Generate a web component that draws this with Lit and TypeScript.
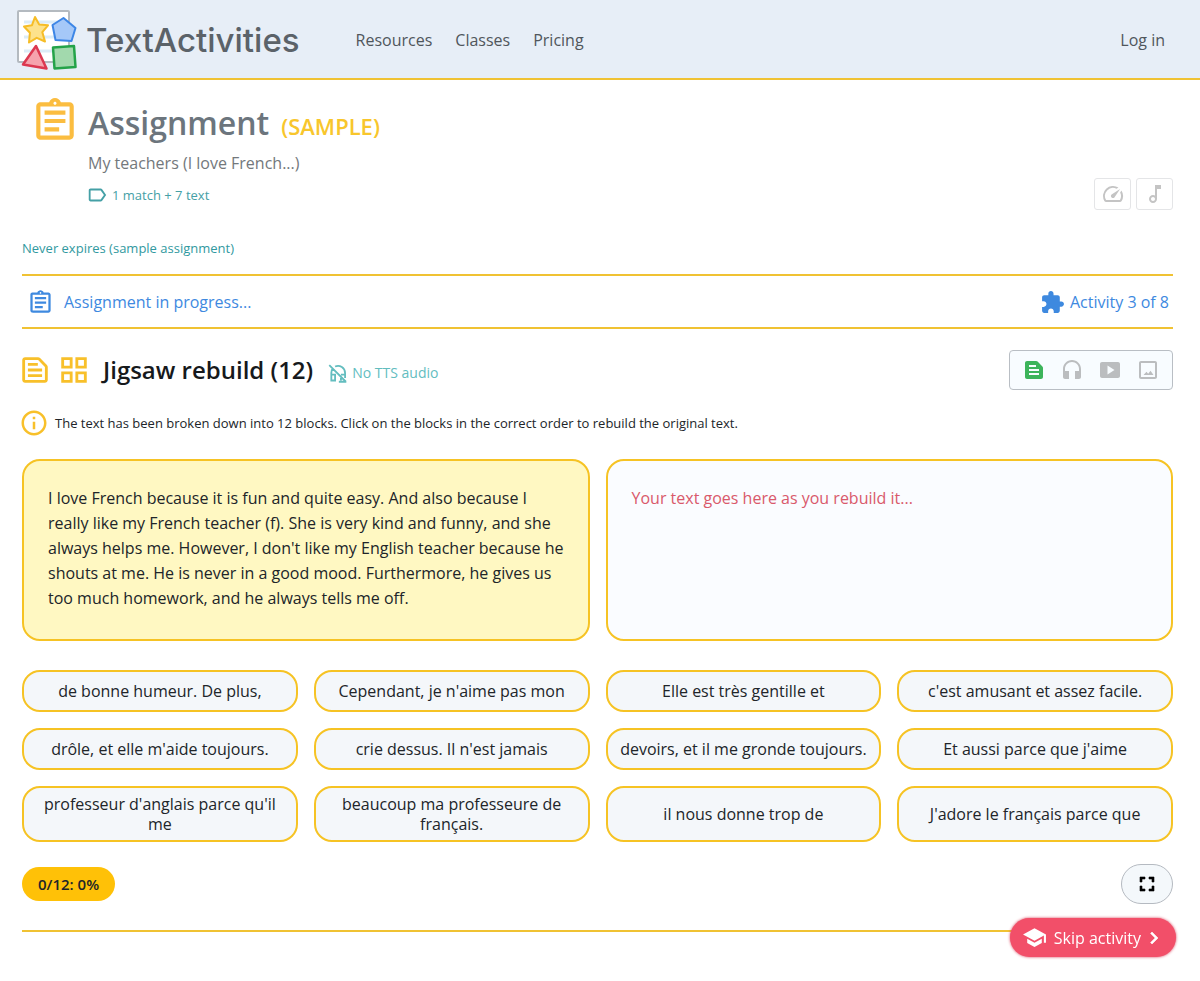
import { LitElement, html, css, svg } from "lit";
import { customElement, property, state } from "lit/decorators.js";

const ICONS: Record<string, string> = {
  assignment:
    "M7 15h7v2H7zm0-4h10v2H7zm0-4h10v2H7zm12-4h-4.18C14.4 1.84 13.3 1 12 1c-1.3 0-2.4.84-2.82 2H5c-.14 0-.27.01-.4.04-.39.08-.74.28-1.01.55-.18.18-.33.4-.43.64-.1.23-.16.49-.16.77v14c0 .27.06.54.16.78s.25.45.43.64c.27.27.62.47 1.01.55.13.02.26.03.4.03h14c1.1 0 2-.9 2-2V5c0-1.1-.9-2-2-2zm-7-.25c.41 0 .75.34.75.75s-.34.75-.75.75-.75-.34-.75-.75.34-.75.75-.75zM19 19H5V5h14v14z",
  label:
    "M17.63 5.84C17.27 5.33 16.67 5 16 5L5 5.01C3.9 5.01 3 5.9 3 7v10c0 1.1.9 1.99 2 1.99L16 19c.67 0 1.27-.33 1.63-.84L22 12l-4.37-6.16zM16 17H5V7h11l3.55 5L16 17z",
  speed:
    "M20.38 8.57l-1.23 1.85a8 8 0 0 1-.22 7.58H5.07A8 8 0 0 1 15.58 6.85l1.85-1.23A10 10 0 0 0 3.35 19a2 2 0 0 0 1.72 1h13.85a2 2 0 0 0 1.74-1 10 10 0 0 0-.27-10.44zm-9.79 6.84a2 2 0 0 0 2.83 0l5.66-8.49-8.49 5.66a2 2 0 0 0 0 2.83z",
  music:
    "M12 3l.01 10.55c-.59-.34-1.27-.55-2-.55C7.79 13 6 14.79 6 17s1.79 4 4.01 4S14 19.21 14 17V7h4V3h-6zm-1.99 16c-1.1 0-2-.9-2-2s.9-2 2-2 2 .9 2 2-.9 2-2 2z",
  extension:
    "M20.5 11H19V7c0-1.1-.9-2-2-2h-4V3.5C13 2.12 11.88 1 10.5 1S8 2.12 8 3.5V5H4c-1.1 0-1.99.9-1.99 2v3.8H3.5c1.49 0 2.7 1.21 2.7 2.7s-1.21 2.7-2.7 2.7H2V20c0 1.1.9 2 2 2h3.8v-1.5c0-1.49 1.21-2.7 2.7-2.7 1.49 0 2.7 1.21 2.7 2.7V22H17c1.1 0 2-.9 2-2v-4h1.5c1.38 0 2.5-1.12 2.5-2.5S21.88 11 20.5 11z",
  snippetOutline:
    "M14.17 5L19 9.83V19H5V5h9.17M14.17 3H5c-1.1 0-2 .9-2 2v14c0 1.1.9 2 2 2h14c1.1 0 2-.9 2-2V9.83c0-.53-.21-1.04-.59-1.41l-4.83-4.83C15.21 3.21 14.7 3 14.17 3zM7 15h10v2H7zM7 11h10v2H7zM7 7h7v2H7z",
  snippet:
    "M20.41 8.41l-4.83-4.83C15.21 3.21 14.7 3 14.17 3H5C3.9 3 3 3.9 3 5v14c0 1.1.9 2 2 2h14c1.1 0 2-.9 2-2V9.83c0-.53-.21-1.04-.59-1.42zM7 7h7v2H7V7zm10 10H7v-2h10v2zm0-4H7v-2h10v2z",
  grid:
    "M3 3v8h8V3H3zm6 6H5V5h4v4zm-6 4v8h8v-8H3zm6 6H5v-4h4v4zm4-16v8h8V3h-8zm6 6h-4V5h4v4zm-6 4v8h8v-8h-8zm6 6h-4v-4h4v4z",
  info:
    "M11 7h2v2h-2zm0 4h2v6h-2zm1-9C6.48 2 2 6.48 2 12s4.48 10 10 10 10-4.48 10-10S17.52 2 12 2zm0 18c-4.41 0-8-3.59-8-8s3.59-8 8-8 8 3.59 8 8-3.59 8-8 8z",
  headphones:
    "M12 2c-4.97 0-9 4.03-9 9v8c0 1.1.9 2 2 2h4v-8H5v-2c0-3.87 3.13-7 7-7s7 3.13 7 7v2h-4v8h4c1.1 0 2-.9 2-2v-8c0-4.97-4.03-9-9-9z",
  video:
    "M20 4H4c-1.1 0-2 .9-2 2v12c0 1.1.9 2 2 2h16c1.1 0 2-.9 2-2V6c0-1.1-.9-2-2-2zM9.5 16.5v-9l7 4.5-7 4.5z",
  image:
    "M19 5v14H5V5h14m0-2H5c-1.1 0-2 .9-2 2v14c0 1.1.9 2 2 2h14c1.1 0 2-.9 2-2V5c0-1.1-.9-2-2-2zM14.5 12.8l-2.3 3-1.7-2L7.5 17h10z",
  fullscreen:
    "M7 14H5v5h5v-2H7v-3zm-2-4h2V7h3V5H5v5zm12 7h-3v2h5v-5h-2v3zM14 5v2h3v3h2V5h-5z",
  school:
    "M5 13.18v4L12 21l7-3.82v-4L12 17l-7-3.82zM12 3L1 9l11 6 9-4.91V17h2V9L12 3z",
  chevron: "M10 6L8.59 7.41 13.17 12l-4.58 4.59L10 18l6-6z",
};

const icon = (name: string, size: number, bold = false) => svg`
  <svg class="icon" width=${size} height=${size} viewBox="0 0 24 24" fill="currentColor"
    stroke=${bold ? "currentColor" : "none"} stroke-width="0.6" aria-hidden="true"><path d=${ICONS[name]}></path></svg>`;

const mutedHeadphones = html`
  <svg class="icon" width="20" height="20" viewBox="0 0 24 24" fill="none" stroke="currentColor"
    stroke-width="2.200" aria-hidden="true">
    <path d="M1.500 2.500l20 20M5.600 6.500A8.500 8.500 0 0 0 4 12v9h4.500v-7H4M8.500 4.200A8.500 8.500 0 0 1 20.500 12v6M15.500 14h5M15.500 16.500V21M13 22.500h9"></path>
  </svg>`;

const logo = html`
  <svg class="icon" width="60" height="60" viewBox="0 0 60 60" aria-hidden="true" stroke-linejoin="round">
    <rect x="1" y="1" width="51" height="51" rx="1" fill="#fff" stroke="#b4bac0" stroke-width="2"></rect>
    <path d="M7 12h39M7 27h39M7 41h39" stroke="#dcecf7" stroke-width="3"></path>
    <path d="M18 7l4.200 7.500 8.800.8-5.700 6.800 2.700 9.400-8.300-3.700-7.700 4.700.9-9.700L7 16.500l8-1.300z" fill="#fde28c" stroke="#f6bd27" stroke-width="2"></path>
    <path d="M46.500 8l12 10-4 13-16-1-3-15z" fill="#a5c8f8" stroke="#3d86e6" stroke-width="2"></path>
    <path d="M19 36l10.500 22.500-23.500-4z" fill="#f6a3ad" stroke="#dc3850" stroke-width="2.500"></path>
    <path d="M36 37.500l21-1.500 1.500 21-21 1.500z" fill="#a2d9ad" stroke="#24a349" stroke-width="2.500"></path>
  </svg>`;

@customElement("text-block")
class TextBlock extends LitElement {
  @property() text = "";

  static styles = css`
    :host {
      display: flex;
    }
    .block {
      flex: 1;
      min-height: 42px;
      padding: 6px 12px;
      border: 2px solid #f6c324;
      border-radius: 18px;
      background: #f4f7fa;
      color: #212529;
      font: 16px/20px "Open Sans", sans-serif;
      cursor: pointer;
    }
  `;

  render() {
    return html`<button class="block" type="button">${this.text}</button>`;
  }
}

@customElement("app-root")
class AppRoot extends LitElement {
  @state() private blocks = [
    "de bonne humeur. De plus,",
    "Cependant, je n'aime pas mon",
    "Elle est très gentille et",
    "c'est amusant et assez facile.",
    "drôle, et elle m'aide toujours.",
    "crie dessus. Il n'est jamais",
    "devoirs, et il me gronde toujours.",
    "Et aussi parce que j'aime",
    "professeur d'anglais parce qu'il me",
    "beaucoup ma professeure de français.",
    "il nous donne trop de",
    "J'adore le français parce que",
  ];

  static styles = css`
    :host {
      display: block;
      background: #fff;
      color: #212529;
      font: 16px/24px "Open Sans", sans-serif;
    }
    * {
      box-sizing: border-box;
    }
    h1,
    h2,
    p {
      margin: 0;
    }
    a {
      color: inherit;
      text-decoration: none;
    }
    button {
      font: inherit;
      cursor: pointer;
    }
    .icon {
      display: block;
      flex: none;
    }
    .topbar {
      display: flex;
      align-items: center;
      height: 80px;
      padding: 1px 35px 0 17px;
      border-bottom: 2px solid #f0c233;
      background: #e7eef7;
      color: #50565c;
    }
    .brand {
      display: flex;
      align-items: center;
      gap: 9px;
      margin-right: 56px;
      font: 500 33px/40px Inter, sans-serif;
      color: #5b6269;
    }
    .links {
      display: flex;
      flex: 1;
      gap: 23px;
    }
    .page {
      padding: 16px 27px 48px 22px;
    }
    .assignment {
      display: flex;
      align-items: flex-start;
      gap: 8px;
      padding-left: 8px;
    }
    .clip {
      color: #fbbd40;
    }
    .about {
      flex: 1;
      padding-top: 4px;
      color: #73787c;
    }
    .title {
      display: flex;
      align-items: baseline;
      gap: 12px;
      font-size: 32px;
      line-height: 46px;
      font-weight: 600;
      color: #6c757d;
    }
    .sample {
      font-size: 22px;
      font-weight: 600;
      color: #f8c62c;
    }
    .subtitle {
      padding-top: 2px;
    }
    .tags {
      display: flex;
      align-items: center;
      gap: 4px;
      padding: 8px 0 3px;
      margin-left: -2px;
      font-size: 13px;
      color: #45a0a6;
    }
    .tools {
      display: flex;
      align-self: flex-end;
      gap: 5px;
    }
    .tool {
      display: grid;
      place-items: center;
      width: 37px;
      height: 32px;
      padding: 0;
      border: 1px solid #e4e5e7;
      border-radius: 3px;
      background: #fff;
      color: #c4c4c4;
    }
    .expires {
      padding: 26px 0 14px;
      font-size: 13px;
      color: #3199a0;
    }
    .progress {
      display: flex;
      align-items: center;
      justify-content: space-between;
      height: 55px;
      padding: 1px 4px 0 5px;
      border: solid #f0c233;
      border-width: 2px 0;
      color: #3e89df;
    }
    .status {
      display: flex;
      align-items: center;
      gap: 10px;
    }
    .status.count {
      gap: 5px;
    }
    .activity {
      display: flex;
      align-items: center;
      padding-top: 21px;
    }
    .kind {
      display: flex;
      gap: 5px;
      margin-left: -4px;
      color: #f8c02a;
    }
    .name {
      margin-left: 12px;
      font-size: 24px;
      line-height: 36px;
      font-weight: 600;
      color: #16191c;
    }
    .tts {
      display: flex;
      flex: 1;
      align-items: center;
      gap: 4px;
      margin-left: 15px;
      padding-top: 6px;
      font-size: 14px;
      color: #63bdbf;
    }
    .modes {
      display: flex;
      gap: 14px;
      padding: 7px 12px;
      border: 1px solid #b9bec4;
      border-radius: 4px;
      background: #f8fcff;
    }
    .mode {
      padding: 0;
      border: 0;
      background: none;
      color: #bbbdbf;
    }
    .mode.on {
      color: #3db45b;
    }
    .hint {
      display: flex;
      align-items: center;
      gap: 6px;
      padding-top: 18px;
      margin-left: -3px;
      font-size: 13px;
    }
    .hint .icon {
      color: #f8c02a;
    }
    .panels {
      display: grid;
      grid-template-columns: 1fr 1fr;
      gap: 16px;
      padding-top: 21px;
    }
    .panel {
      min-height: 182px;
      padding: 25px 16px 26px 24px;
      border: 2px solid #f6c324;
      border-radius: 18px;
      background: #fafcff;
      line-height: 25px;
      color: #d9596b;
    }
    .panel.source {
      background: #fff8c2;
      color: #212529;
    }
    .blocks {
      display: grid;
      grid-template-columns: repeat(4, 1fr);
      gap: 16px;
      padding-top: 29px;
    }
    .footer {
      display: flex;
      align-items: center;
      justify-content: space-between;
      padding: 22px 0 26px;
      border-bottom: 2px solid #f0c233;
    }
    .score {
      padding: 5px 16px;
      border-radius: 17px;
      background: #ffc107;
      font-size: 15px;
      font-weight: 600;
    }
    .full {
      display: grid;
      place-items: center;
      width: 52px;
      height: 40px;
      padding: 0;
      border: 1px solid #b5bac1;
      border-radius: 20px;
      background: #f4f8fb;
      color: #000;
    }
    .skip {
      position: fixed;
      right: 24px;
      bottom: 24px;
      display: flex;
      align-items: center;
      height: 39px;
      padding: 0 10px 0 12px;
      gap: 7px;
      border: 0;
      border-radius: 20px;
      background: #f24f69;
      box-shadow: 0 0 3px #d8405a;
      color: #fff;
    }
    .skip .icon:last-child {
      margin-left: -6px;
    }
  `;

  render() {
    return html`
      <header class="topbar">
        <a class="brand" href="#">${logo}<span>TextActivities</span></a>
        <nav class="links">
          <a href="#">Resources</a>
          <a href="#">Classes</a>
          <a href="#">Pricing</a>
        </nav>
        <a href="#">Log in</a>
      </header>
      <main class="page">
        <section class="assignment">
          <span class="clip">${icon("assignment", 50)}</span>
          <div class="about">
            <h1 class="title">Assignment <span class="sample">(SAMPLE)</span></h1>
            <p class="subtitle">My teachers (I love French...)</p>
            <p class="tags">${icon("label", 22)}1 match + 7 text</p>
          </div>
          <div class="tools">
            <button class="tool" type="button" aria-label="Speed">${icon("speed", 24)}</button>
            <button class="tool" type="button" aria-label="Music">${icon("music", 24)}</button>
          </div>
        </section>
        <p class="expires">Never expires (sample assignment)</p>
        <section class="progress">
          <span class="status">${icon("assignment", 27)}Assignment in progress...</span>
          <span class="status count">${icon("extension", 25)}Activity 3 of 8</span>
        </section>
        <section class="activity">
          <span class="kind">${icon("snippetOutline", 34)}${icon("grid", 34)}</span>
          <h2 class="name">Jigsaw rebuild (12)</h2>
          <span class="tts">${mutedHeadphones}No TTS audio</span>
          <div class="modes">
            <button class="mode on" type="button" aria-label="Text">${icon("snippet", 24)}</button>
            <button class="mode" type="button" aria-label="Audio">${icon("headphones", 24)}</button>
            <button class="mode" type="button" aria-label="Video">${icon("video", 24)}</button>
            <button class="mode" type="button" aria-label="Image">${icon("image", 24)}</button>
          </div>
        </section>
        <p class="hint">
          ${icon("info", 30)}The text has been broken down into 12 blocks. Click on the blocks in
          the correct order to rebuild the original text.
        </p>
        <section class="panels">
          <p class="panel source">
            I love French because it is fun and quite easy. And also because I really like my French
            teacher (f). She is very kind and funny, and she always helps me. However, I don't like
            my English teacher because he shouts at me. He is never in a good mood. Furthermore, he
            gives us too much homework, and he always tells me off.
          </p>
          <p class="panel">Your text goes here as you rebuild it...</p>
        </section>
        <section class="blocks">
          ${this.blocks.map((text) => html`<text-block .text=${text}></text-block>`)}
        </section>
        <footer class="footer">
          <span class="score">0/12: 0%</span>
          <button class="full" type="button" aria-label="Full screen">${icon("fullscreen", 24, true)}</button>
        </footer>
      </main>
      <button class="skip" type="button">
        ${icon("school", 25)}<span>Skip activity</span>${icon("chevron", 24, true)}
      </button>
    `;
  }
}
